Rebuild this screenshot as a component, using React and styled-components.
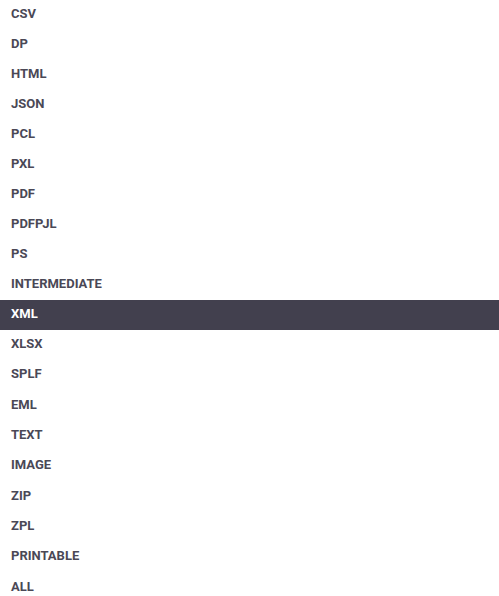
import styled, { createGlobalStyle } from "styled-components"

const GlobalStyle = createGlobalStyle`
  body {
    margin: 0;
    background: #fff;
    font-family: Roboto, "Liberation Sans", sans-serif;
  }
`

const formats = [
  "CSV", "DP", "HTML", "JSON", "PCL", "PXL", "PDF", "PDFPJL", "PS",
  "INTERMEDIATE", "XML", "XLSX", "SPLF", "EML", "TEXT", "IMAGE", "ZIP",
  "ZPL", "PRINTABLE", "ALL",
]

export default function App() {
  const selected = "XML"
  const selIndex = formats.indexOf(selected)
  return (
    <>
      <GlobalStyle />
      <List>
        {formats.map((f, i) => (
          <Item key={f} $active={i === selIndex} $below={i > selIndex}>
            {f}
          </Item>
        ))}
      </List>
    </>
  )
}

const List = styled.ul`
  margin: 0;
  padding: 0;
  list-style: none;
  width: 499px;
`

const Item = styled.li`
  height: ${(p) => (p.$below ? "30.34px" : "30px")};
  box-sizing: border-box;
  padding: 0 11px 3px;
  display: flex;
  align-items: center;
  font-size: 13px;
  font-weight: 700;
  color: ${(p) => (p.$active ? "#fff" : "#4a4856")};
  background: ${(p) => (p.$active ? "#42404e" : "transparent")};
  cursor: pointer;
`
